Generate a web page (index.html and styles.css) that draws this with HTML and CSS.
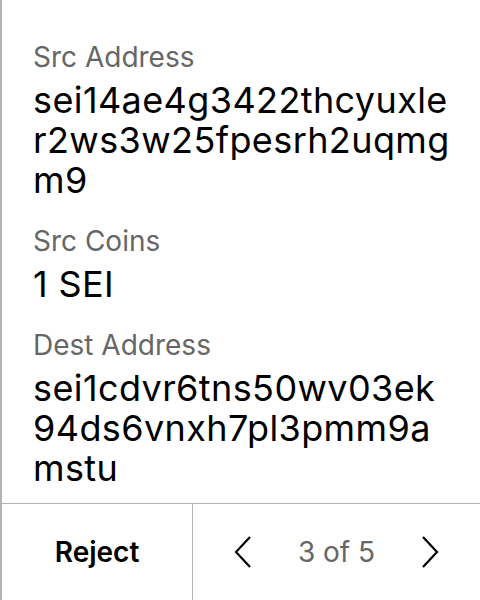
FILE: index.html
```html
<!DOCTYPE html>
<html>
<head>
<meta charset="utf-8">
<link rel="stylesheet" href="styles.css">
</head>
<body>
<div class="screen">
  <div class="content">
    <div class="field">
      <div class="label">Src Address</div>
      <div class="value">sei14ae4g3422thcyuxler2ws3w25fpesrh2uqmgm9</div>
    </div>
    <div class="field">
      <div class="label">Src Coins</div>
      <div class="value">1 SEI</div>
    </div>
    <div class="field">
      <div class="label">Dest Address</div>
      <div class="value">sei1cdvr6tns50wv03ek94ds6vnxh7pl3pmm9amstu</div>
    </div>
  </div>
  <div class="footer">
    <div class="reject">Reject</div>
    <div class="pager">
      <svg class="chev" width="18" height="32" viewBox="0 0 18 32"><path d="M16 1 L2 16 L16 31" fill="none" stroke="#000" stroke-width="2.2"/></svg>
      <span class="count">3 of 5</span>
      <svg class="chev" width="18" height="32" viewBox="0 0 18 32"><path d="M2 1 L16 16 L2 31" fill="none" stroke="#000" stroke-width="2.2"/></svg>
    </div>
  </div>
</div>
</body>
</html>
```
FILE: styles.css
```css
html, body {
  margin: 0;
  padding: 0;
  background: #fff;
}
body {
  font-family: Inter, "Noto Sans", sans-serif;
  color: #000;
}
.screen {
  width: 480px;
  height: 600px;
  box-sizing: border-box;
  border-left: 2px solid #b3b3b3;
  display: flex;
  flex-direction: column;
}
.content {
  flex: 1;
  padding: 37px 30px 0 31px;
  display: flex;
  flex-direction: column;
  gap: 21px;
}
.label {
  font-size: 28px;
  line-height: 40px;
  color: #666;
}
.value {
  margin-top: 3px;
  font-size: 36px;
  line-height: 40px;
  letter-spacing: 0.4px;
  word-break: break-all;
}
.footer {
  height: 96px;
  border-top: 1px solid #b3b3b3;
  display: flex;
}
.reject {
  width: 190px;
  border-right: 1px solid #b3b3b3;
  display: flex;
  align-items: center;
  justify-content: center;
  font-size: 28px;
  font-weight: 600;
}
.pager {
  flex: 1;
  display: flex;
  align-items: center;
  justify-content: space-between;
  padding: 0 41px 0 41px;
}
.count {
  font-size: 28px;
  color: #666;
}
.chev {
  display: block;
}
```
